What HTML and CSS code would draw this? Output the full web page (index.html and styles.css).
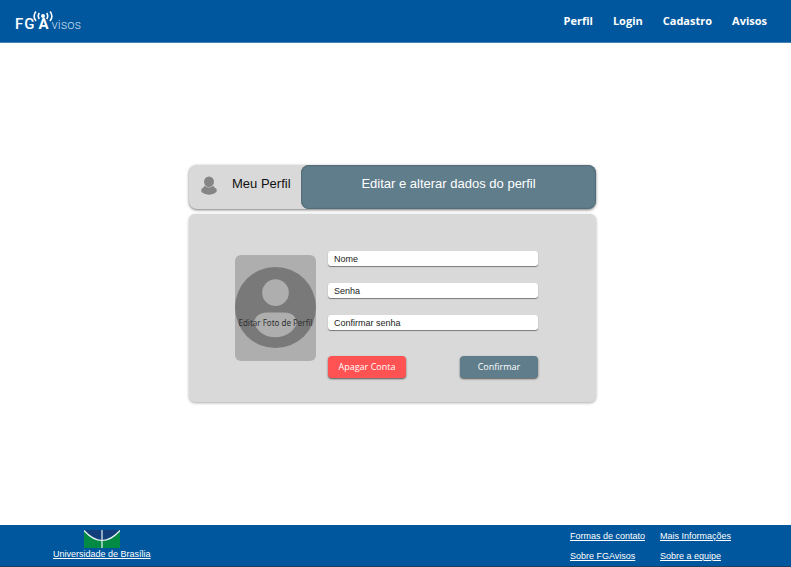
FILE: index.html
```html
<!DOCTYPE html>
<html lang="pt-BR">
<head>
<meta charset="utf-8">
<meta name="viewport" content="width=device-width, initial-scale=1">
<title>FGAvisos</title>
<link rel="stylesheet" href="styles.css">
</head>
<body>
<header class="topbar">
  <a class="logo" href="#">
    <span class="logo-strong">F</span>
    <span class="logo-strong">G</span>
    <span class="logo-antenna">A
      <svg class="waves" viewBox="0 0 20 14" aria-hidden="true">
        <circle cx="10" cy="5" r="2" fill="#fff" stroke="none"/>
        <path d="M6.3 2Q4.3 5 6.3 8M13.7 2Q15.7 5 13.7 8M3 .6Q-.8 5 3 10M17 .6Q20.8 5 17 10"/>
      </svg>
    </span>
    <span class="logo-light">visos</span>
  </a>
  <nav class="nav">
    <a href="#">Perfil</a>
    <a href="#">Login</a>
    <a href="#">Cadastro</a>
    <a href="#">Avisos</a>
  </nav>
</header>

<main class="content">
  <section class="profile">
    <div class="tabs">
      <button class="tab tab-profile" type="button">
        <svg class="user-icon" viewBox="0 0 16 20" aria-hidden="true">
          <ellipse cx="8" cy="5.7" rx="5" ry="5.2"/>
          <path d="M3.4 9.8Q8 13.4 12.6 9.8Q13 11.5 15.6 13V16Q12 18.8 8 18.8Q4 18.8.4 16V13Q3 11.5 3.4 9.8Z"/>
        </svg>
        <span>Meu Perfil</span>
      </button>
      <button class="tab tab-edit" type="button">Editar e alterar dados do perfil</button>
    </div>
    <form class="card">
      <button class="photo" type="button">
        <svg class="avatar" viewBox="0 0 82 82" aria-hidden="true">
          <circle cx="41" cy="41" r="41" fill="#797979"/>
          <circle cx="41" cy="26" r="13.5" fill="#aeaeae"/>
          <path d="M32 46H50C57 46 62 50 63 57C58 67 51 71 41 71C31 71 24 67 19 57C20 50 25 46 32 46Z" fill="#aeaeae"/>
        </svg>
        <span class="photo-text">Editar Foto de Perfil</span>
      </button>
      <div class="fields">
        <input type="text" placeholder="Nome" aria-label="Nome">
        <input type="password" placeholder="Senha" aria-label="Senha">
        <input type="password" placeholder="Confirmar senha" aria-label="Confirmar senha">
        <div class="actions">
          <button class="btn btn-delete" type="button">Apagar Conta</button>
          <button class="btn btn-confirm" type="submit">Confirmar</button>
        </div>
      </div>
    </form>
  </section>
</main>

<footer class="footer">
  <a class="unb" href="#">
    <svg class="unb-logo" viewBox="0 0 36 18" aria-hidden="true">
      <path d="M0 0H36V18H0Z" fill="#008a43"/>
      <path d="M0 0H36Q27 10.5 18 10.5Q9 10.5 0 0Z" fill="#123f7c"/>
      <path d="M0 .5Q9 10.5 18 10.5Q27 10.5 36 .5M18 0V18" fill="none" stroke="#e8f1f5" stroke-width="1.2"/>
    </svg>
    <span>Universidade de Brasília</span>
  </a>
  <div class="links">
    <a href="#">Formas de contato</a>
    <a href="#">Mais Informações</a>
    <a href="#">Sobre FGAvisos</a>
    <a href="#">Sobre a equipe</a>
  </div>
</footer>
</body>
</html>
```
FILE: styles.css
```css
* {
  box-sizing: border-box;
}

body {
  margin: 0;
  min-height: 100vh;
  display: flex;
  flex-direction: column;
  background: #fff;
  font-family: "Liberation Sans", Arial, sans-serif;
}

button {
  border: 0;
  font-family: inherit;
  cursor: pointer;
}

.topbar {
  display: flex;
  justify-content: space-between;
  align-items: center;
  padding: 0 24px 0 15px;
  height: 43px;
  background: #00579d;
  border-bottom: 1px solid #4082b5;
}

.logo {
  display: flex;
  align-items: baseline;
  gap: 1px;
  padding-top: 6px;
  color: #fff;
  font: 500 15px/18px Roboto, sans-serif;
  text-decoration: none;
}

.logo-antenna {
  position: relative;
  padding: 0 2px 0 3px;
  font-weight: 700;
}

.waves {
  position: absolute;
  top: -4px;
  left: -2px;
  width: 20px;
  height: 14px;
  fill: none;
  stroke: #fff;
  stroke-width: 1.6;
}

.logo-light {
  color: #c8dcec;
  font-size: 13px;
  font-weight: 300;
}

.nav {
  display: flex;
  gap: 20px;
}

.nav a {
  color: #fff;
  font: 700 11px/16px "Open Sans", sans-serif;
  text-decoration: none;
}

.content {
  flex: 1;
  display: flex;
  align-items: center;
  justify-content: center;
  padding: 0 6px 2px 0;
}

.profile {
  width: 52%;
  min-width: 407px;
  max-width: 407px;
  display: flex;
  flex-direction: column;
  gap: 5px;
}

.tabs {
  display: flex;
  background: #d9d9d9;
  border-radius: 8px;
  box-shadow: 0 1px 3px #777;
}

.tab {
  height: 44px;
  padding: 0 0 6px;
  border-radius: 8px;
  font-size: 13px;
  line-height: 16px;
}

.tab-profile {
  width: 112px;
  display: flex;
  align-items: center;
  gap: 15px;
  padding-left: 12px;
  background: none;
  color: #111;
  white-space: nowrap;
}

.user-icon {
  width: 16px;
  height: 20px;
  margin-top: 4px;
  fill: #858585;
}

.tab-edit {
  flex: 1;
  background: #607d8b;
  color: #fff;
  box-shadow: inset 0 0 1px 1px #536c78;
}

.card {
  display: flex;
  gap: 12px;
  padding: 37px 58px 24px 46px;
  background: #d9d9d9;
  border-radius: 6px;
  box-shadow: 0 1px 3px #aaa;
}

.photo {
  position: relative;
  width: 81px;
  height: 106px;
  margin-top: 4px;
  padding: 0;
  border-radius: 6px;
  background: #aeaeae;
}

.avatar {
  display: block;
  width: 100%;
}

.photo-text {
  position: absolute;
  top: 62px;
  left: 0;
  right: 0;
  color: #303030;
  font: 8px/12px "Noto Sans", sans-serif;
  white-space: nowrap;
}

.fields {
  flex: 1;
  display: flex;
  flex-direction: column;
  gap: 17px;
}

.fields input {
  width: 100%;
  height: 15px;
  padding: 2px 6px 0;
  border: 0;
  border-radius: 3px;
  background: #fff;
  box-shadow: 0 1px 1px #777;
  font: 9px/12px "Liberation Sans", Arial, sans-serif;
}

.fields input::placeholder {
  color: #222;
  opacity: 1;
}

.actions {
  display: flex;
  justify-content: space-between;
  padding-top: 9px;
}

.btn {
  width: 78px;
  height: 22px;
  padding: 0;
  border-radius: 4px;
  box-shadow: 0 1px 2px #555;
  color: #fff;
  font: 9px/14px "Open Sans", sans-serif;
}

.btn-delete {
  background: #ff5252;
}

.btn-confirm {
  background: #607d8b;
}

.footer {
  display: flex;
  justify-content: space-between;
  height: 42px;
  padding: 5px 60px 0 53px;
  background: #00579d;
  border-bottom: 1px solid #1c3f60;
  font-size: 9px;
  line-height: 12px;
}

.footer a {
  color: #fff;
}

.unb {
  display: flex;
  flex-direction: column;
  align-items: center;
}

.unb-logo {
  width: 36px;
  height: 18px;
}

.links {
  display: grid;
  grid-template-columns: auto auto;
  align-content: start;
  gap: 8px 15px;
}
```
